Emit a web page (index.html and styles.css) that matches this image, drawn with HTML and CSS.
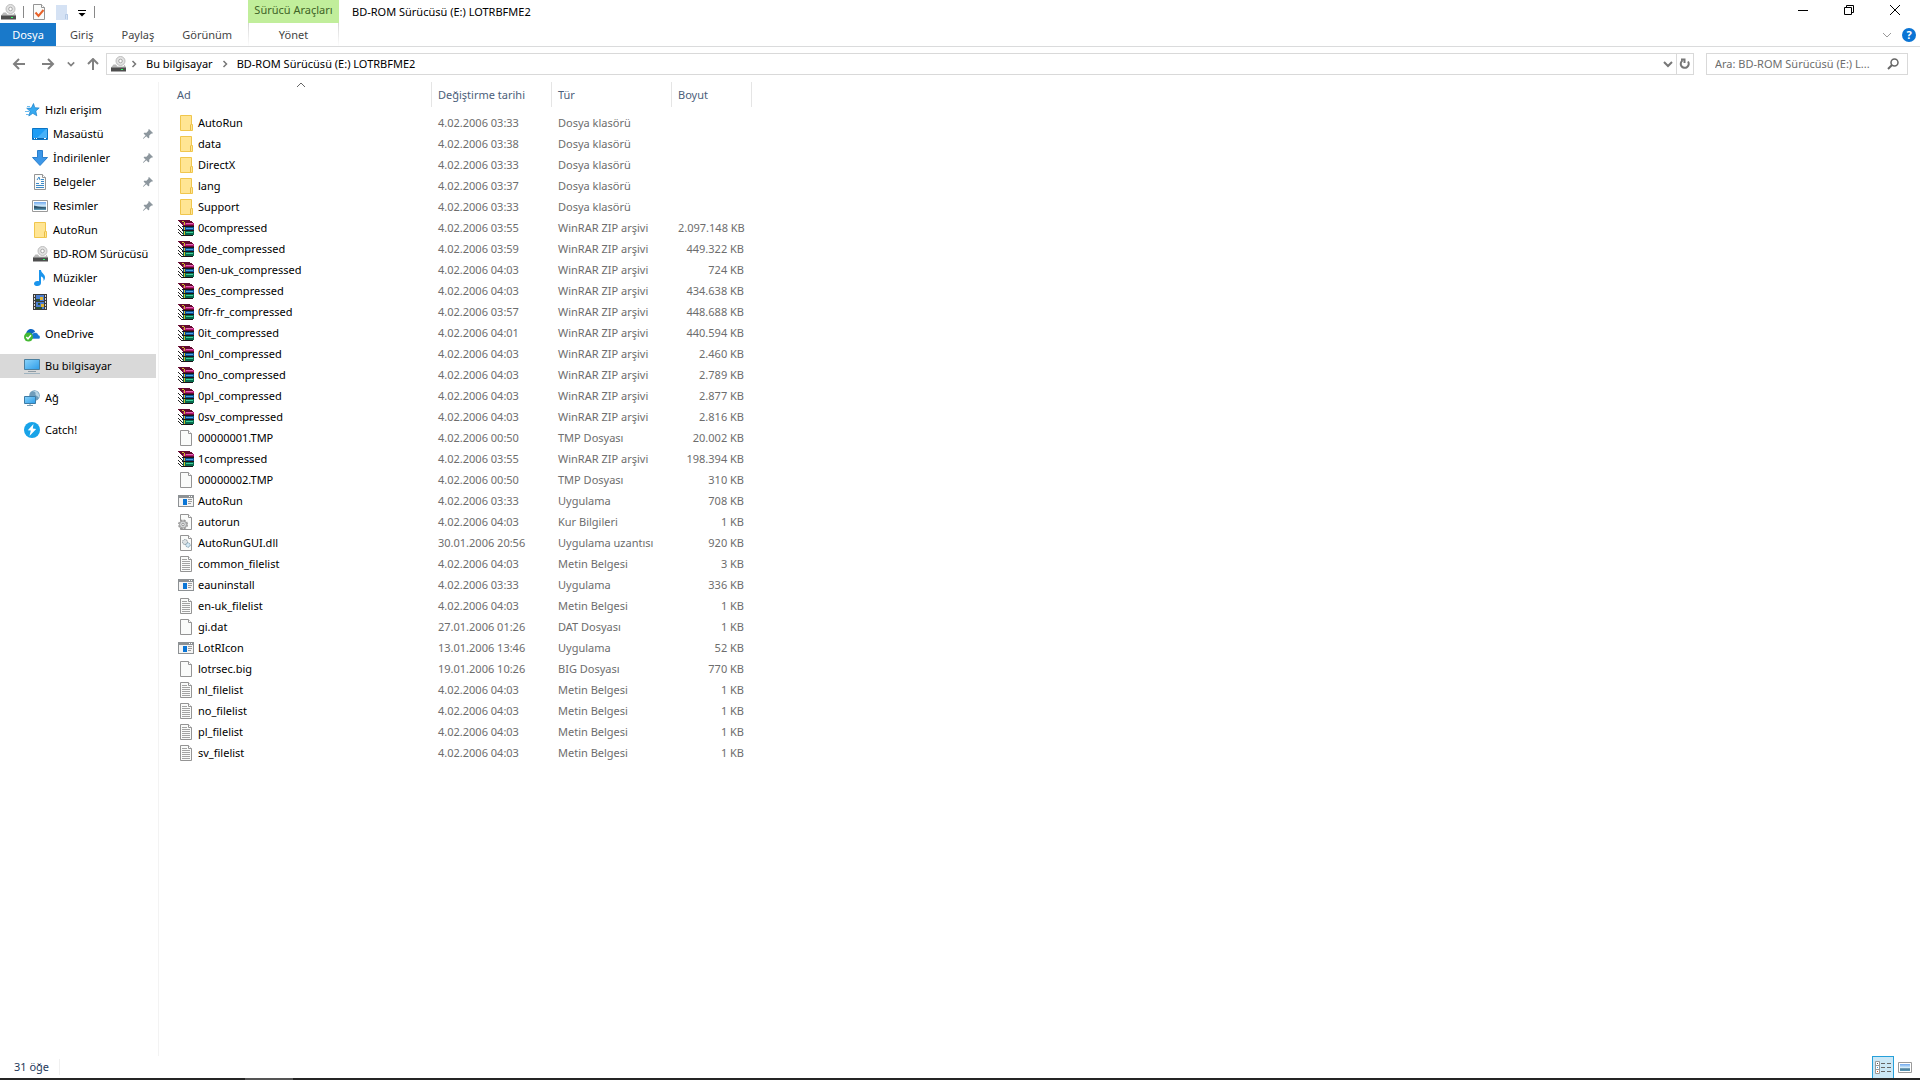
FILE: index.html
```html
<!DOCTYPE html>
<html lang="tr">
<head>
    <meta charset="UTF-8" />
    <title>BD-ROM Sürücüsü (E:) LOTRBFME2</title>
    <meta name="viewport" content="width=device-width, initial-scale=1" />
    <link rel="stylesheet" href="styles.css">
</head>
<body>
    <!-- Icon set -->
    <svg class="sprite" aria-hidden="true">
        <linearGradient id="g-screen" x1="0" y1="0" x2="1" y2="1"><stop offset="0" stop-color="#8bd4fb" /><stop offset="1" stop-color="#2c9ce8" /></linearGradient>
        <linearGradient id="g-photo" x1="0" y1="0" x2="0" y2="1"><stop offset="0" stop-color="#6fa8ee" /><stop offset=".5" stop-color="#d3ecfa" /><stop offset=".7" stop-color="#4c7d98" /><stop offset="1" stop-color="#5b9ab8" /></linearGradient>
        <symbol id="drive" viewBox="0 0 16 16">
            <circle cx="10.500" cy="5" r="4.500" fill="#e2e2e2" stroke="#bdbdbd" />
            <circle cx="10.500" cy="5" r="1.800" fill="#fff" stroke="#a8a8a8" />
            <path d="M3.500 8.500H6l1.500 2h6l1-2 1.500 3H1z" fill="#b9b9b9" />
            <path d="M1 11.500h15v4H1z" fill="#4e4e4e" />
            <path d="M1 11h15v1H1z" fill="#8a8a8a" />
            <path d="M11 13h2v1h-2z" fill="#3f6" />
        </symbol>
        <symbol id="folder" viewBox="0 0 16 16">
            <path d="M2.500.5h11v9h1v6h-12z" fill="#ffe594" stroke="#f0c64d" />
            <path d="M12.500 15v-5l1-1" fill="none" stroke="#e9bd45" />
        </symbol>
        <symbol id="zip" viewBox="0 0 16 16" shape-rendering="crispEdges">
            <path d="M0 1h5v15H4L0 12z" fill="#fff" />
            <path d="M0 0h12v1h2v1h1v1h1v3H5V5H4V4H3V3H2V2H1V1H0z" fill="#650a30" />
            <path d="M5 3h11v2H5z" fill="#b01a72" />
            <path d="M8 3h7v1H8z" fill="#e667b4" />
            <path d="M4 6h12v1H4zM4 10h12v1H4zM4 15h11v1H4z" fill="#1c1418" />
            <path d="M5 7h11v3H5z" fill="#0b4f91" />
            <path d="M8 8h7v1H8z" fill="#4aa3e0" />
            <path d="M5 11h11v4H5z" fill="#076b4d" />
            <path d="M8 12h7v1H8z" fill="#3fcf9c" />
            <path d="M0 5h1v1H0zM1 6h1v1H1zM2 7h1v1H2zM3 8h1v1H3zM4 9h1v1H4zM0 9h1v1H0zM1 10h1v1H1zM2 11h1v1H2zM3 12h1v1H3zM4 13h1v1H4zM0 12h1v1H0zM1 13h1v1H1zM2 14h1v1H2zM3 15h1v1H3z" fill="#222" />
            <path d="M4 1h2v1H4zM6 2h1v1H6zM6 3h1v2H6zM6 7h1v3H6zM6 11h1v4H6z" fill="#d3bd2c" />
        </symbol>
        <symbol id="file" viewBox="0 0 16 16">
            <path d="M2.500.5h8l3 3v12h-11z" fill="#fafbfa" stroke="#949494" />
            <path d="M10.500.5v3h3" fill="#fff" stroke="#949494" />
        </symbol>
        <symbol id="text" viewBox="0 0 16 16">
            <use href="#file" />
            <path d="M4 3.500h5M4 5.500h8M4 7.500h8M4 9.500h8M4 11.500h8M4 13.500h8" stroke="#a3a3a3" />
        </symbol>
        <symbol id="app" viewBox="0 0 16 16" shape-rendering="crispEdges">
            <path d="M0 2h16v12H0z" fill="#8d9194" />
            <path d="M1 5h14v8H1z" fill="#f4f4f4" />
            <path d="M5 6h4v6H5z" fill="#0a75d6" />
            <path d="M10 6h4v1h-4zM10 8h4v1h-4zM10 10h3v1h-3z" fill="#9c9c9c" />
            <path d="M11 3h1v1h-1zM13 3h1v1h-1z" fill="#fff" />
        </symbol>
        <symbol id="inf" viewBox="0 0 16 16">
            <use href="#file" />
            <circle cx="5" cy="10.500" r="4" fill="#c9c9c9" stroke="#999" stroke-width="2" stroke-dasharray="2 1.150" />
            <circle cx="5" cy="10.500" r="3.500" fill="#d2d5d6" stroke="#a3a3a3" />
            <circle cx="5" cy="10.500" r="1.200" fill="#fff" stroke="#999" />
        </symbol>
        <symbol id="dll" viewBox="0 0 16 16">
            <use href="#file" />
            <circle cx="7" cy="7" r="2.500" fill="#dce2e5" stroke="#8c979e" stroke-dasharray="1.500 .6" />
            <circle cx="10" cy="10" r="2.200" fill="#d2e8f5" stroke="#7f9cac" stroke-dasharray="1.500 .6" />
        </symbol>
        <symbol id="star" viewBox="0 0 16 16">
            <path d="M9.500 1.500l1.300 4.200 4.400.3-3.400 3 1 4.800-4-2.500-4 2.700 1.400-4.700-3.500-3 4.600-.2z" fill="#36a9f0" stroke="#1b7fc9" stroke-width=".7" />
            <path d="M3 4.500h3M1 9.500h4M2 12.500h3" stroke="#6cbcf0" />
        </symbol>
        <symbol id="desktop" viewBox="0 0 16 16">
            <path d="M.5 2.500h15v11H.5z" fill="#1e9df5" stroke="#0b74c4" />
            <path d="M5 12L14 3h1v9z" fill="#47b1f8" />
            <path d="M1 12.500h14" stroke="#0d65ac" />
            <path d="M2 12.500h1M4 12.500h1M12 12.500h2" stroke="#fff" />
        </symbol>
        <symbol id="download" viewBox="0 0 16 16">
            <path d="M5.500.5h5v7h5L8 15.500.5 7.500h5z" fill="#3c97e8" stroke="#2b7fcd" />
        </symbol>
        <symbol id="docs" viewBox="0 0 16 16">
            <use href="#file" />
            <path d="M5 6l2-3 1 3M9 5.500h3M9 7.500h3M4 9.500h3M9 9.500h3M4 11.500h8M4 13.500h8" fill="none" stroke="#3d8ac8" />
        </symbol>
        <symbol id="picture" viewBox="0 0 16 16">
            <path d="M.5 2.500h15v11H.5z" fill="#fff" stroke="#9a9a9a" />
            <path d="M2 4h12v8H2z" fill="url(#g-photo)" />
            <path d="M2 7.500l4 1 8 1v1H2z" fill="#2d546d" />
        </symbol>
        <symbol id="music" viewBox="0 0 16 16">
            <path d="M7 0h2c0 3 4 4 4 7.500 0 1.500-.6 2.500-1.500 3.500.5-2.800-.8-4-2.500-4.500V13c0 1.800-1.600 3-3.500 3S2 15.200 2 13.700 3.500 11 5.300 11c.7 0 1.200.1 1.700.3z" fill="#1a94ec" />
        </symbol>
        <symbol id="video" viewBox="0 0 16 16" shape-rendering="crispEdges">
            <path d="M1 0h14v16H1z" fill="#3b3b3b" />
            <path d="M2 1h1v2H2zM2 4h1v2H2zM2 7h1v2H2zM2 10h1v2H2zM2 13h1v2H2zM13 1h1v2h-1zM13 4h1v2h-1zM13 7h1v2h-1zM13 10h1v2h-1zM13 13h1v2h-1z" fill="#d8d8d8" />
            <path d="M4 1h8v6H4zM4 8h8v7H4z" fill="#4b7ed0" />
            <path d="M8 3h3v3H8zM9 10h3v3H9z" fill="#e0b334" />
            <path d="M4 5h4v2H4zM4 13h6v2H4zM6 9h2v2H6z" fill="#2c5230" />
        </symbol>
        <symbol id="onedrive" viewBox="0 0 16 16">
            <path d="M2 9c0-3.500 2-6 5-6 2 0 3.300 1 4 2.500L7 12z" fill="#0c65c2" />
            <path d="M7 13c-.5-4 1.500-6.500 4.200-6.500 1.800 0 3 1.200 3.200 2.500 1.200.3 1.800 1 1.800 2.200 0 1.200-.7 1.800-2 1.800z" fill="#1477d2" stroke="#fff" stroke-width=".6" />
            <circle cx="4.500" cy="11" r="4.500" fill="#45b934" />
            <path d="M2.300 11l1.700 1.800 3-3.500" fill="none" stroke="#fff" stroke-width="1.500" />
        </symbol>
        <symbol id="pc" viewBox="0 0 16 16">
            <path d="M.5 1.500h15v10H.5z" fill="url(#g-screen)" stroke="#4a7f9f" />
            <path d="M4 13.500h8" stroke="#8f9ba3" />
            <path d="M0 15.500h16" stroke="#9fb3c0" />
        </symbol>
        <symbol id="network" viewBox="0 0 16 16">
            <circle cx="10.500" cy="5.500" r="5.300" fill="#6f9dbb" />
            <path d="M8 1.500c3-.5 4 1 3.500 2.500S14 6 15 8c.8-3-.5-6-3.500-7.300z" fill="#b9d6e6" />
            <path d="M.5 6.500h11v7H.5z" fill="url(#g-screen)" stroke="#3d7ba5" />
            <path d="M3 15.500h6M6 14v1" stroke="#7899ae" />
        </symbol>
        <symbol id="catch" viewBox="0 0 16 16">
            <circle cx="8" cy="8" r="8" fill="#18a3e8" />
            <path d="M9.500 2L3.800 8.200l3 .3L5.500 14l6.700-7-3.400-.4z" fill="#fff" />
        </symbol>
        <symbol id="pin" viewBox="0 0 10 10">
            <path d="M6 0l4 4-1 .7-.6-.2L6.300 6.600 6.200 9 5.300 9.300 3.300 7.300.5 9.800H0v-.5L2.600 6.600.7 4.700 1 3.800l2.500-.1L5.500 1.600 5.300.8z" fill="#8d979e" />
        </symbol>
        <symbol id="chevron" viewBox="0 0 6 8">
            <path d="M1.500 1l3 3-3 3" fill="none" stroke="#777" stroke-width="1.500" />
        </symbol>
        <symbol id="down" viewBox="0 0 10 8">
            <path d="M1 2l4 4 4-4" fill="none" stroke="currentColor" stroke-width="2" />
        </symbol>
    </svg>

    <header class="titlebar">
        <div class="quick-access">
            <svg class="icon"><use href="#drive" /></svg>
            <span class="sep"></span>
            <button aria-label="Özellikler"><svg class="icon" viewBox="0 0 16 16"><use href="#file" /><path d="M4.500 8.500l3 3.500 5-6" fill="none" stroke="#e8622a" stroke-width="2" /></svg></button>
            <button aria-label="Yeni klasör"><svg class="icon" viewBox="0 0 16 16"><path d="M2 1h11v9h1v6H2z" fill="#d5e2f4" /><path d="M11.500 15v-4.500h2v5" fill="none" stroke="#b7cbe6" /></svg></button>
            <button aria-label="Hızlı Erişim Araç Çubuğunu Özelleştir"><svg class="icon-small" viewBox="0 0 10 10"><path d="M1 3.500h8" stroke="#000" /><path d="M1.500 6h7L5 9.500z" /></svg></button>
            <span class="sep"></span>
        </div>
        <div class="context-label">Sürücü Araçları</div>
        <h1>BD-ROM Sürücüsü (E:) LOTRBFME2</h1>
        <div class="window-buttons">
            <button aria-label="Simge Durumuna Küçült"><svg viewBox="0 0 10 10"><path d="M0 5.500h10" /></svg></button>
            <button aria-label="Önceki Boyut"><svg viewBox="0 0 10 10"><path d="M.5 2.500h7v7h-7zM2.500 2V.5h7v7H8" /></svg></button>
            <button aria-label="Kapat"><svg viewBox="0 0 10 10"><path d="M0 0l10 10M10 0L0 10" /></svg></button>
        </div>
    </header>

    <nav class="ribbon">
        <div class="tabs">
            <button class="tab file-tab">Dosya</button>
            <button class="tab">Giriş</button>
            <button class="tab">Paylaş</button>
            <button class="tab">Görünüm</button>
        </div>
        <button class="tab context-tab">Yönet</button>
        <div class="ribbon-end">
            <button class="expand" aria-label="Şeridi Genişlet"><svg viewBox="0 0 10 8"><path d="M1 2l4 4 4-4" fill="none" stroke="#999" /></svg></button>
            <button class="help" aria-label="Yardım">?</button>
        </div>
    </nav>

    <div class="address-row">
        <div class="history">
            <button aria-label="Geri"><svg viewBox="0 0 14 12"><path d="M7 1L2 6l5 5M2 6h11" /></svg></button>
            <button aria-label="İleri"><svg viewBox="0 0 14 12"><path d="M7 1l5 5-5 5M12 6H1" /></svg></button>
            <button class="recent" aria-label="Son konumlar"><svg viewBox="0 0 10 8"><path d="M1 2l4 4 4-4" /></svg></button>
            <button aria-label="Yukarı"><svg viewBox="0 0 14 12"><path d="M2 6l5-5 5 5M7 1v11" /></svg></button>
        </div>
        <div class="address">
            <svg class="icon"><use href="#drive" /></svg>
            <svg class="chevron"><use href="#chevron" /></svg>
            <a href="#">Bu bilgisayar</a>
            <svg class="chevron"><use href="#chevron" /></svg>
            <a href="#">BD-ROM Sürücüsü (E:) LOTRBFME2</a>
            <button class="address-drop" aria-label="Önceki Konumlar"><svg viewBox="0 0 10 8"><use href="#down" /></svg></button>
            <button class="refresh" aria-label="Yenile"><svg viewBox="0 0 12 12"><path d="M3.500 2.500a4 4 0 1 0 5.500 1M2 1.500h3.500V5" fill="none" stroke="#777" stroke-width="2" /></svg></button>
        </div>
        <form class="search">
            <input type="text" aria-label="Ara" placeholder="Ara: BD-ROM Sürücüsü (E:) L..." />
            <button type="button" aria-label="Ara"><svg viewBox="0 0 12 12"><circle cx="7.500" cy="4.500" r="3.500" fill="none" stroke="#666" stroke-width="1.500" /><path d="M5 7L1 11" stroke="#666" stroke-width="2" /></svg></button>
        </form>
    </div>

    <div class="content">
        <nav class="sidebar">
            <a href="#"><svg class="icon"><use href="#star" /></svg>Hızlı erişim</a>
            <a class="sub" href="#"><svg class="icon"><use href="#desktop" /></svg>Masaüstü<svg class="pin"><use href="#pin" /></svg></a>
            <a class="sub" href="#"><svg class="icon"><use href="#download" /></svg>İndirilenler<svg class="pin"><use href="#pin" /></svg></a>
            <a class="sub" href="#"><svg class="icon"><use href="#docs" /></svg>Belgeler<svg class="pin"><use href="#pin" /></svg></a>
            <a class="sub" href="#"><svg class="icon"><use href="#picture" /></svg>Resimler<svg class="pin"><use href="#pin" /></svg></a>
            <a class="sub" href="#"><svg class="icon"><use href="#folder" /></svg>AutoRun</a>
            <a class="sub" href="#"><svg class="icon"><use href="#drive" /></svg>BD-ROM Sürücüsü</a>
            <a class="sub" href="#"><svg class="icon"><use href="#music" /></svg>Müzikler</a>
            <a class="sub" href="#"><svg class="icon"><use href="#video" /></svg>Videolar</a>
            <a class="group" href="#"><svg class="icon"><use href="#onedrive" /></svg>OneDrive</a>
            <a class="group selected" href="#"><svg class="icon"><use href="#pc" /></svg>Bu bilgisayar</a>
            <a class="group" href="#"><svg class="icon"><use href="#network" /></svg>Ağ</a>
            <a class="group" href="#"><svg class="icon"><use href="#catch" /></svg>Catch!</a>
        </nav>

        <main>
            <table class="files">
                <colgroup>
                    <col class="col-name" />
                    <col class="col-date" />
                    <col class="col-type" />
                    <col class="col-size" />
                </colgroup>
                <thead>
                    <tr>
                        <th>Ad<svg class="sort" viewBox="0 0 10 6"><path d="M1 5l4-4 4 4" fill="none" stroke="#666" /></svg></th>
                        <th>Değiştirme tarihi</th>
                        <th>Tür</th>
                        <th>Boyut</th>
                    </tr>
                </thead>
                <tbody>
                    <tr><td><svg class="icon"><use href="#folder" /></svg>AutoRun</td><td>4.02.2006 03:33</td><td>Dosya klasörü</td><td></td></tr>
                    <tr><td><svg class="icon"><use href="#folder" /></svg>data</td><td>4.02.2006 03:38</td><td>Dosya klasörü</td><td></td></tr>
                    <tr><td><svg class="icon"><use href="#folder" /></svg>DirectX</td><td>4.02.2006 03:33</td><td>Dosya klasörü</td><td></td></tr>
                    <tr><td><svg class="icon"><use href="#folder" /></svg>lang</td><td>4.02.2006 03:37</td><td>Dosya klasörü</td><td></td></tr>
                    <tr><td><svg class="icon"><use href="#folder" /></svg>Support</td><td>4.02.2006 03:33</td><td>Dosya klasörü</td><td></td></tr>
                    <tr><td><svg class="icon"><use href="#zip" /></svg>0compressed</td><td>4.02.2006 03:55</td><td>WinRAR ZIP arşivi</td><td>2.097.148 KB</td></tr>
                    <tr><td><svg class="icon"><use href="#zip" /></svg>0de_compressed</td><td>4.02.2006 03:59</td><td>WinRAR ZIP arşivi</td><td>449.322 KB</td></tr>
                    <tr><td><svg class="icon"><use href="#zip" /></svg>0en-uk_compressed</td><td>4.02.2006 04:03</td><td>WinRAR ZIP arşivi</td><td>724 KB</td></tr>
                    <tr><td><svg class="icon"><use href="#zip" /></svg>0es_compressed</td><td>4.02.2006 04:03</td><td>WinRAR ZIP arşivi</td><td>434.638 KB</td></tr>
                    <tr><td><svg class="icon"><use href="#zip" /></svg>0fr-fr_compressed</td><td>4.02.2006 03:57</td><td>WinRAR ZIP arşivi</td><td>448.688 KB</td></tr>
                    <tr><td><svg class="icon"><use href="#zip" /></svg>0it_compressed</td><td>4.02.2006 04:01</td><td>WinRAR ZIP arşivi</td><td>440.594 KB</td></tr>
                    <tr><td><svg class="icon"><use href="#zip" /></svg>0nl_compressed</td><td>4.02.2006 04:03</td><td>WinRAR ZIP arşivi</td><td>2.460 KB</td></tr>
                    <tr><td><svg class="icon"><use href="#zip" /></svg>0no_compressed</td><td>4.02.2006 04:03</td><td>WinRAR ZIP arşivi</td><td>2.789 KB</td></tr>
                    <tr><td><svg class="icon"><use href="#zip" /></svg>0pl_compressed</td><td>4.02.2006 04:03</td><td>WinRAR ZIP arşivi</td><td>2.877 KB</td></tr>
                    <tr><td><svg class="icon"><use href="#zip" /></svg>0sv_compressed</td><td>4.02.2006 04:03</td><td>WinRAR ZIP arşivi</td><td>2.816 KB</td></tr>
                    <tr><td><svg class="icon"><use href="#file" /></svg>00000001.TMP</td><td>4.02.2006 00:50</td><td>TMP Dosyası</td><td>20.002 KB</td></tr>
                    <tr><td><svg class="icon"><use href="#zip" /></svg>1compressed</td><td>4.02.2006 03:55</td><td>WinRAR ZIP arşivi</td><td>198.394 KB</td></tr>
                    <tr><td><svg class="icon"><use href="#file" /></svg>00000002.TMP</td><td>4.02.2006 00:50</td><td>TMP Dosyası</td><td>310 KB</td></tr>
                    <tr><td><svg class="icon"><use href="#app" /></svg>AutoRun</td><td>4.02.2006 03:33</td><td>Uygulama</td><td>708 KB</td></tr>
                    <tr><td><svg class="icon"><use href="#inf" /></svg>autorun</td><td>4.02.2006 04:03</td><td>Kur Bilgileri</td><td>1 KB</td></tr>
                    <tr><td><svg class="icon"><use href="#dll" /></svg>AutoRunGUI.dll</td><td>30.01.2006 20:56</td><td>Uygulama uzantısı</td><td>920 KB</td></tr>
                    <tr><td><svg class="icon"><use href="#text" /></svg>common_filelist</td><td>4.02.2006 04:03</td><td>Metin Belgesi</td><td>3 KB</td></tr>
                    <tr><td><svg class="icon"><use href="#app" /></svg>eauninstall</td><td>4.02.2006 03:33</td><td>Uygulama</td><td>336 KB</td></tr>
                    <tr><td><svg class="icon"><use href="#text" /></svg>en-uk_filelist</td><td>4.02.2006 04:03</td><td>Metin Belgesi</td><td>1 KB</td></tr>
                    <tr><td><svg class="icon"><use href="#file" /></svg>gi.dat</td><td>27.01.2006 01:26</td><td>DAT Dosyası</td><td>1 KB</td></tr>
                    <tr><td><svg class="icon"><use href="#app" /></svg>LotRIcon</td><td>13.01.2006 13:46</td><td>Uygulama</td><td>52 KB</td></tr>
                    <tr><td><svg class="icon"><use href="#file" /></svg>lotrsec.big</td><td>19.01.2006 10:26</td><td>BIG Dosyası</td><td>770 KB</td></tr>
                    <tr><td><svg class="icon"><use href="#text" /></svg>nl_filelist</td><td>4.02.2006 04:03</td><td>Metin Belgesi</td><td>1 KB</td></tr>
                    <tr><td><svg class="icon"><use href="#text" /></svg>no_filelist</td><td>4.02.2006 04:03</td><td>Metin Belgesi</td><td>1 KB</td></tr>
                    <tr><td><svg class="icon"><use href="#text" /></svg>pl_filelist</td><td>4.02.2006 04:03</td><td>Metin Belgesi</td><td>1 KB</td></tr>
                    <tr><td><svg class="icon"><use href="#text" /></svg>sv_filelist</td><td>4.02.2006 04:03</td><td>Metin Belgesi</td><td>1 KB</td></tr>
                </tbody>
            </table>
        </main>
    </div>

    <footer class="statusbar">
        <span class="count">31 öğe</span>
        <div class="views">
            <button class="active" aria-label="Ayrıntılar"><svg viewBox="0 0 16 14"><path d="M.5.5h4v12h-4zM.5 4.500h4M.5 8.500h4" fill="#fff" stroke="#999" /><path d="M2 2.500h1" stroke="#555" /><path d="M2 6.500h1" stroke="#38a0e0" /><path d="M2 10.500h1" stroke="#d0541c" /><path d="M6 2.500h4M12 2.500h4M6 6.500h4M12 6.500h4M6 10.500h4M12 10.500h4" stroke="#666" /></svg></button>
            <button aria-label="Büyük simgeler"><svg viewBox="0 0 14 11"><path d="M.5.5h13v10H.5z" fill="#fff" stroke="#9a9a9a" /><path d="M2 2h10v7H2z" fill="url(#g-photo)" /></svg></button>
        </div>
    </footer>
    <div class="taskbar"><span></span></div>
</body>
</html>
```

FILE: styles.css
```css
* {
    box-sizing: border-box;
}

body {
    margin: 0;
    height: 100vh;
    display: flex;
    flex-direction: column;
    font-family: "Noto Sans", "Open Sans", sans-serif;
    font-size: 11px;
    line-height: 16px;
    color: #000;
    background-color: #fff;
}

a {
    color: inherit;
    text-decoration: none;
}

button {
    display: flex;
    align-items: center;
    justify-content: center;
    padding: 0;
    border: 0;
    background: none;
    font: inherit;
    color: inherit;
}

svg {
    display: block;
    flex: none;
}

.sprite {
    position: absolute;
    width: 0;
    height: 0;
}

.icon {
    width: 16px;
    height: 16px;
}

.icon-small {
    width: 10px;
    height: 10px;
}

/* Title bar */
.titlebar {
    display: flex;
    height: 23px;
    flex: none;
}

.quick-access {
    display: flex;
    align-items: center;
    gap: 7px;
    width: 248px;
}

    .quick-access .sep {
        width: 1px;
        height: 12px;
        background-color: #888;
    }

.context-label {
    width: 91px;
    padding-top: 2px;
    text-align: center;
    color: #3f6326;
    background-color: #c1ee9b;
}

.titlebar h1 {
    margin: 0;
    padding: 4px 0 0 13px;
    font-size: 11px;
    font-weight: 400;
}

.window-buttons {
    display: flex;
    margin-left: auto;
    padding-right: 2px;
}

    .window-buttons button {
        width: 46px;
        height: 20px;
    }

    .window-buttons svg {
        width: 10px;
        height: 10px;
        fill: none;
        stroke: #000;
    }

/* Ribbon */
.ribbon {
    display: flex;
    height: 24px;
    flex: none;
    border-bottom: 1px solid #dadbdc;
}

.tabs {
    display: flex;
    width: 248px;
}

.tab {
    height: 23px;
    padding: 0 14px;
    color: #444;
}

.file-tab {
    width: 56px;
    padding: 0;
    color: #fff;
    background-color: #1979ca;
}

.context-tab {
    width: 91px;
    border: solid;
    border-width: 0 1px;
    border-image: linear-gradient(#d4d4d4, #fff) 1;
}

.ribbon-end {
    display: flex;
    align-items: center;
    gap: 10px;
    margin-left: auto;
    padding-right: 4px;
}

.expand svg {
    width: 10px;
    height: 8px;
}

.help {
    width: 14px;
    height: 14px;
    border-radius: 50%;
    font-weight: 700;
    color: #fff;
    background-color: #0a74d4;
}

/* Address row */
.address-row {
    display: flex;
    flex: none;
    gap: 12px;
    padding: 6px 12px 7px;
}

.history {
    display: flex;
    align-items: center;
    width: 88px;
    margin-right: -6px;
    justify-content: space-between;
}

    .history svg {
        width: 14px;
        height: 12px;
        fill: none;
        stroke: #808080;
        stroke-width: 2px;
    }

    .history .recent svg {
        width: 8px;
    }

    .history button:first-child {
        margin-right: 4px;
    }

.address {
    display: flex;
    align-items: center;
    flex: 1;
    height: 22px;
    padding-left: 3px;
    border: 1px solid #d9d9d9;
}

    .address a {
        padding: 0 9px;
    }

    .address > .icon {
        margin-right: 5px;
    }

.chevron {
    width: 6px;
    height: 8px;
}

.address-drop {
    width: 16px;
    margin-left: auto;
    color: #777;
}

    .address-drop svg {
        width: 10px;
        height: 8px;
    }

.refresh {
    width: 17px;
    height: 20px;
    border-left: 1px solid #d9d9d9;
}

    .refresh svg {
        width: 12px;
        height: 12px;
    }

.search {
    display: flex;
    width: 202px;
    height: 22px;
    border: 1px solid #d9d9d9;
}

    .search input {
        flex: 1;
        min-width: 0;
        padding: 0 0 0 8px;
        border: 0;
        outline: 0;
        font: inherit;
    }

    .search input::placeholder {
        color: #6d6d6d;
    }

    .search button {
        width: 28px;
    }

    .search svg {
        width: 12px;
        height: 12px;
    }

/* Sidebar */
.content {
    display: flex;
    flex: 1;
    min-height: 0;
}

.sidebar {
    width: 159px;
    flex: none;
    padding: 16px 2px 0 0;
    border-right: 1px solid #f3f3f3;
}

    .sidebar a {
        display: flex;
        align-items: center;
        gap: 5px;
        height: 24px;
        padding-left: 24px;
        white-space: nowrap;
    }

    .sidebar .sub {
        padding-left: 32px;
    }

    .sidebar .group {
        margin-top: 8px;
    }

    .sidebar .selected {
        background-color: #d9d9d9;
    }

.pin {
    width: 10px;
    height: 10px;
    margin: 0 3px 0 auto;
}

/* File list */
main {
    flex: 1;
    overflow: auto;
    padding-left: 12px;
}

.files {
    width: 581px;
    table-layout: fixed;
    border-collapse: separate;
    border-spacing: 0;
}

.col-name {
    width: 261px;
}

.col-date,
.col-type {
    width: 120px;
}

.col-size {
    width: 80px;
}

.files th {
    position: relative;
    height: 25px;
    padding: 0 6px;
    border-right: 1px solid #e5e5e5;
    font-weight: 400;
    text-align: left;
    color: #4c607a;
}

.sort {
    position: absolute;
    top: 0;
    left: 50%;
    width: 10px;
    height: 6px;
    margin-left: -5px;
}

.files tbody::before {
    content: "";
    display: block;
    height: 6px;
}

.files td {
    height: 21px;
    padding: 0 8px 1px 6px;
    white-space: nowrap;
    color: #6d6d6d;
}

    .files td:first-child {
        padding-left: 7px;
        color: #000;
    }

    .files td:last-child {
        text-align: right;
    }

    .files td .icon {
        display: inline-block;
        margin-right: 4px;
        vertical-align: top;
    }

/* Status bar */
.statusbar {
    display: flex;
    align-items: center;
    justify-content: space-between;
    flex: none;
    height: 22px;
    padding: 0 5px 0 14px;
    color: #1e395b;
}

.count {
    padding-right: 10px;
    border-right: 1px solid #f0f0f0;
}

.views {
    display: flex;
}

    .views button {
        width: 21px;
        height: 22px;
    }

    .views svg {
        width: 14px;
        height: 11px;
    }

    .views .active {
        width: 22px;
        border: 1px solid #26a0da;
        border-bottom: 0;
        background-color: #cce8f6;
    }

    .views .active svg {
        width: 16px;
        height: 14px;
    }

.taskbar {
    flex: none;
    height: 2px;
    padding-left: 245px;
    background-color: #252525;
}

    .taskbar span {
        display: block;
        width: 48px;
        height: 2px;
        background-color: #555;
    }
```
